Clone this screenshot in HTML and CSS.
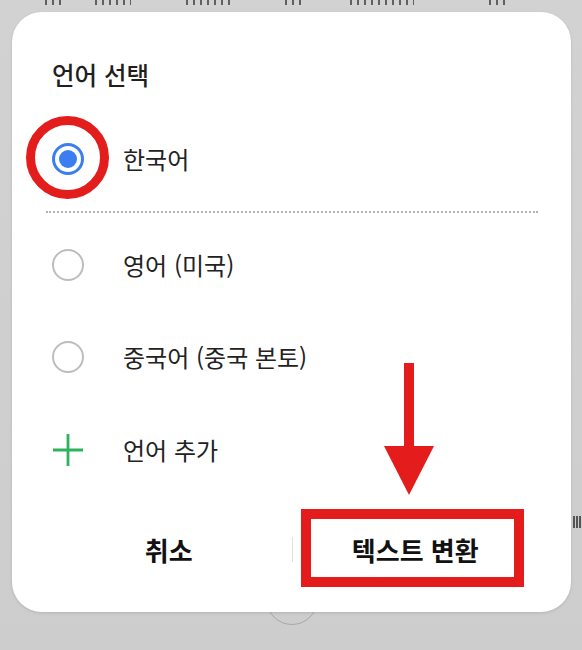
FILE: index.html
```html
<!DOCTYPE html>
<html lang="ko">
<head>
<meta charset="utf-8">
<title>언어 선택</title>
<link rel="stylesheet" href="styles.css">
</head>
<body>
<div class="screen">
  <div class="bg-top"><i class="m1"></i><i class="m2"></i><i class="m3"></i><i class="m4"></i><i class="m5"></i><i class="m6"></i></div>
  <div class="home-arc"></div>
  <div class="edge-marks"></div>
  <div class="dialog">
    <h2 class="title">언어 선택</h2>
    <ul class="langs">
      <li class="row"><span class="icon"><span class="radio checked"></span></span><span class="label">한국어</span></li>
      <li class="sep"></li>
      <li class="row"><span class="icon"><span class="radio"></span></span><span class="label">영어 (미국)</span></li>
      <li class="row"><span class="icon"><span class="radio"></span></span><span class="label">중국어 (중국 본토)</span></li>
      <li class="row add"><span class="icon"><svg class="plus" width="30" height="32" viewBox="0 0 30 32"><path d="M15 0V32M0 16H30" stroke="#2db35b" stroke-width="2.8" fill="none"/></svg></span><span class="label">언어 추가</span></li>
    </ul>
    <div class="actions">
      <button class="btn">취소</button>
      <span class="divider"></span>
      <button class="btn">텍스트 변환</button>
    </div>
  </div>
  <div class="annot-ring"></div>
  <svg class="annot-arrow" width="50" height="132" viewBox="0 0 50 132"><rect x="20" y="0" width="10" height="86" fill="#e41c1c"/><polygon points="0,83 50,83 25,132" fill="#e41c1c"/></svg>
  <div class="annot-box"></div>
</div>
</body>
</html>
```

FILE: styles.css
```css
html, body {
  margin: 0;
  padding: 0;
}
body {
  width: 582px;
  height: 650px;
  overflow: hidden;
  background: #cfcfcf;
  font-family: "Noto Sans CJK KR", "Noto Sans", sans-serif;
  color: #1e1e1e;
}
.screen {
  position: relative;
  width: 582px;
  height: 650px;
  overflow: hidden;
  background: linear-gradient(#d2d2d2, #cdcdcd);
}
.bg-top {
  height: 12px;
  display: flex;
  align-items: flex-start;
  padding-left: 45px;
}
.bg-top i {
  display: block;
  height: 5px;
  background: repeating-linear-gradient(90deg, #444 0 2px, transparent 2px 7px);
  opacity: 0.8;
}
.bg-top .m1 { width: 16px; }
.bg-top .m2 { width: 36px; margin-left: 34px; }
.bg-top .m3 { width: 44px; margin-left: 55px; }
.bg-top .m4 { width: 20px; margin-left: 55px; }
.bg-top .m5 { width: 64px; margin-left: 45px; }
.bg-top .m6 { width: 20px; margin-left: 75px; }
.home-arc {
  position: absolute;
  left: 266px;
  top: 573px;
  width: 52px;
  height: 52px;
  border: 1px solid #a9a9a9;
  border-radius: 50%;
  box-sizing: border-box;
}
.edge-marks {
  position: absolute;
  left: 573px;
  top: 516px;
  width: 9px;
  height: 12px;
  background: repeating-linear-gradient(90deg, #555 0 1.5px, transparent 1.5px 3px);
}
.dialog {
  position: relative;
  margin-left: 12px;
  width: 559px;
  height: 600px;
  box-sizing: border-box;
  padding: 48px 33px 0 34px;
  background: #fff;
  border-radius: 30px;
  box-shadow: 0 1px 3px rgba(0, 0, 0, 0.12);
}
.title {
  margin: 0;
  padding-left: 6px;
  font-size: 24.5px;
  line-height: 30px;
  font-weight: 500;
  color: #1f1f1f;
}
.langs {
  list-style: none;
  margin: 23px 0 0;
  padding: 0;
}
.row {
  display: flex;
  align-items: center;
  height: 92px;
  padding-left: 6px;
}
.row.add {
  margin-top: 1px;
}
.icon {
  width: 32px;
  height: 32px;
  display: flex;
  align-items: center;
  justify-content: center;
  margin-right: 39px;
}
.radio {
  width: 32px;
  height: 32px;
  box-sizing: border-box;
  border: 2.5px solid #bdbdbd;
  border-radius: 50%;
  display: flex;
  align-items: center;
  justify-content: center;
}
.radio.checked {
  border: 3px solid #3a7ef0;
}
.radio.checked::after {
  content: "";
  width: 18px;
  height: 18px;
  border-radius: 50%;
  background: #3a7ef0;
}
.label {
  font-size: 24px;
  line-height: 30px;
  color: #222;
}
.sep {
  margin: 6px 0 6px;
  height: 0;
  border-top: 2px dotted #b4b4b4;
}
.actions {
  margin-top: 16px;
  height: 74px;
  display: flex;
  align-items: center;
}
.btn {
  flex: 1;
  height: 74px;
  border: 0;
  background: transparent;
  font-family: inherit;
  font-size: 26px;
  font-weight: 700;
  color: #111;
  padding: 0;
}
.divider {
  width: 1px;
  height: 25px;
  background: #e0e0e0;
}
.annot-ring {
  position: absolute;
  left: 26px;
  top: 116px;
  width: 83px;
  height: 83px;
  box-sizing: border-box;
  border: 9.5px solid #e31c1c;
  border-radius: 50%;
}
.annot-arrow {
  position: absolute;
  left: 384px;
  top: 363px;
}
.annot-box {
  position: absolute;
  left: 301px;
  top: 509px;
  width: 223px;
  height: 78px;
  box-sizing: border-box;
  border: 10px solid #e41c1c;
}
```
